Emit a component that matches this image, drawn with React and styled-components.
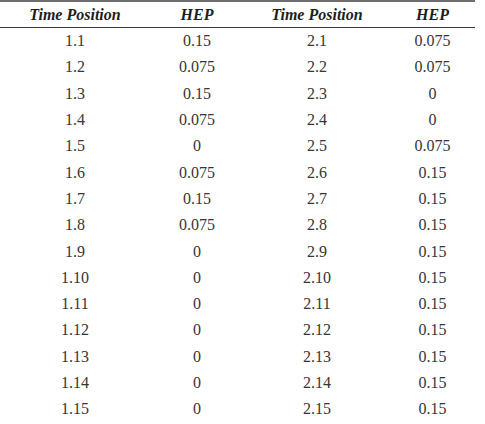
import React from 'react';
import styled, { createGlobalStyle } from 'styled-components';

const rows = [
  ['1.1', '0.15', '2.1', '0.075'],
  ['1.2', '0.075', '2.2', '0.075'],
  ['1.3', '0.15', '2.3', '0'],
  ['1.4', '0.075', '2.4', '0'],
  ['1.5', '0', '2.5', '0.075'],
  ['1.6', '0.075', '2.6', '0.15'],
  ['1.7', '0.15', '2.7', '0.15'],
  ['1.8', '0.075', '2.8', '0.15'],
  ['1.9', '0', '2.9', '0.15'],
  ['1.10', '0', '2.10', '0.15'],
  ['1.11', '0', '2.11', '0.15'],
  ['1.12', '0', '2.12', '0.15'],
  ['1.13', '0', '2.13', '0.15'],
  ['1.14', '0', '2.14', '0.15'],
  ['1.15', '0', '2.15', '0.15'],
];

const headers = ['Time Position', 'HEP', 'Time Position', 'HEP'];

function App() {
  return (
    <>
      <GlobalStyle />
      <Table>
        <HeaderRow>
          {headers.map((h, i) => (
            <HeadCell key={i}>{h}</HeadCell>
          ))}
        </HeaderRow>
        {rows.map((r) => (
          <Row key={r[0]}>
            {r.map((v, i) => (
              <Cell key={i}>{v}</Cell>
            ))}
          </Row>
        ))}
      </Table>
    </>
  );
}

export default App;

const GlobalStyle = createGlobalStyle`
  body {
    margin: 0;
    background: #fff;
    font-family: "Liberation Serif", "Times New Roman", serif;
    color: #222;
  }
`;

const Table = styled.div`
  width: 475px;
  border-top: 2px solid #6e6e6e;
  font-family: "Liberation Serif", "Times New Roman", serif;
`;

const Row = styled.div`
  display: grid;
  grid-template-columns: 150px 94px 146px 85px;
  height: 26.3px;
  align-items: center;
`;

const HeaderRow = styled(Row)`
  height: 25px;
  border-bottom: 1.5px solid #3a3a3a;
`;

const Cell = styled.div`
  font-size: 16px;
  line-height: 1;
  text-align: center;
  color: #363636;
`;

const HeadCell = styled(Cell)`
  font-weight: bold;
  font-style: italic;
  color: #1e1e1e;
`;
